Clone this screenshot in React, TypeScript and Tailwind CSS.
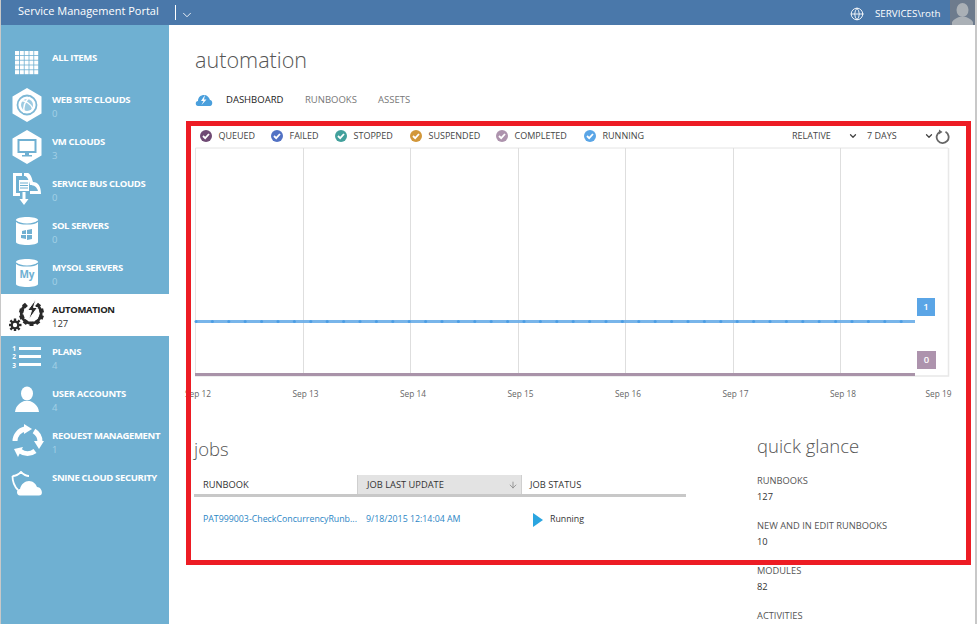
import { ChevronDown, Globe, ArrowDown } from 'lucide-react';
import type { ReactNode } from 'react';

const GridIcon = () => (
  <svg width="24" height="24" viewBox="0 0 24 24" fill="#fff">
    {[0, 1, 2, 3, 4].flatMap(r =>
      [0, 1, 2, 3, 4].map(c => <rect key={`${r}-${c}`} x={c * 4.8} y={r * 4.8} width="4" height="4" />)
    )}
  </svg>
);

const Hex = ({ children }: { children: ReactNode }) => (
  <svg width="30" height="34" viewBox="0 0 30 34">
    <path d="M15 0 L29.500 8.500 V25.500 L15 34 L0.500 25.500 V8.500 Z" fill="#fff" />
    {children}
  </svg>
);

const WebIcon = () => (
  <Hex>
    <circle cx="15" cy="17" r="9.500" fill="none" stroke="#7db8d6" strokeWidth="1.800" />
    <circle cx="15" cy="17" r="6" fill="#9ccbe2" />
    <path d="M9 13 C13 12 19 16 21 21 M18 9 C14 12 11 18 12 25" stroke="#fff" strokeWidth="1.500" fill="none" />
  </Hex>
);

const VmIcon = () => (
  <Hex>
    <rect x="6.500" y="10" width="17" height="12" fill="none" stroke="#6fb0d2" strokeWidth="2" />
    <path d="M13 23 h4 v2 h3 v1.500 h-10 v-1.500 h3 z" fill="#6fb0d2" />
  </Hex>
);

const BusIcon = () => (
  <svg width="28" height="32" viewBox="0 0 28 32" fill="none">
    <path d="M0 0 H9 V3 H3 V20 H7 V23 H0 Z" fill="#fff" />
    <path d="M11 0 H15 C18 1 19 6 20 9 C25 9 28 13 28 21 H17 V18 H25 C24 14 21 12 17 12 C16 8 15 4 12 3 H11 Z" fill="#fff" />
    <rect x="6" y="7" width="10" height="11" fill="#fff" />
    <path d="M7 10 h8 M7 12.500 h8 M7 15 h8" stroke="#6fb0d2" />
    <path d="M9.500 19 h3 v7 h3 l-4.500 6 l-4.500 -6 h3 z" fill="#fff" />
  </svg>
);

const DbIcon = ({ children }: { children: ReactNode }) => (
  <svg width="24" height="30" viewBox="0 0 24 30">
    <path d="M1 4 C1 0 23 0 23 4 V26 C23 30 1 30 1 26 Z" fill="#fff" />
    <path d="M1 5 C5 9 19 9 23 5" stroke="#6fb0d2" strokeWidth="1.200" fill="none" />
    {children}
  </svg>
);

const AutomationIcon = () => {
  const teeth = [40, 75, 110, 145, 180, 215, 250, 285, 320];
  const small = [0, 45, 90, 135, 180, 225, 270, 315];
  return (
    <svg width="36" height="32" viewBox="0 0 36 32">
      {teeth.map(a => (
        <rect key={a} x="20.500" y="2" width="4" height="4.500" fill="#2a2a2a" transform={`rotate(${a} 22.500 14.500)`} />
      ))}
      <path d="M17 5.800 A10 10 0 1 0 28.500 6.500" fill="none" stroke="#2a2a2a" strokeWidth="2.600" />
      <path d="M27 0 L18.500 11.500 H22.500 L19.500 21 L28.500 8.500 H24.500 Z" fill="#2a2a2a" stroke="#fff" strokeWidth="1" />
      {small.map(a => (
        <rect key={a} x="4.800" y="19.500" width="2.400" height="3" fill="#2a2a2a" transform={`rotate(${a} 6 26)`} />
      ))}
      <circle cx="6" cy="26" r="3.300" fill="none" stroke="#2a2a2a" strokeWidth="2.200" />
    </svg>
  );
};

const PlansIcon = () => (
  <svg width="30" height="24" viewBox="0 0 30 24" fill="#fff">
    <rect x="7" y="2" width="22" height="3" />
    <rect x="7" y="10" width="22" height="3" />
    <rect x="7" y="18" width="22" height="3" />
    <text x="2" y="5.500" textAnchor="middle" fontSize="6.500" fontWeight="700" fontFamily="Open Sans">1</text>
    <text x="2" y="14" textAnchor="middle" fontSize="6.500" fontWeight="700" fontFamily="Open Sans">2</text>
    <text x="2" y="22.500" textAnchor="middle" fontSize="6.500" fontWeight="700" fontFamily="Open Sans">3</text>
  </svg>
);

const UserIcon = () => (
  <svg width="24" height="26" viewBox="0 0 24 26" fill="#fff">
    <ellipse cx="12" cy="7.500" rx="6" ry="7" />
    <path d="M0 26 C1 19 5 17 9 15 H15 C19 17 23 19 24 26 Z" />
  </svg>
);

const RequestIcon = () => (
  <svg width="33" height="34" viewBox="0 0 33 34" fill="none">
    <g stroke="#fff" strokeWidth="5">
      <path d="M4 17 A12.500 12.500 0 0 1 14 5" />
      <path d="M23 7 A12.500 12.500 0 0 1 29 18" />
      <path d="M24 27 A12.500 12.500 0 0 1 9 27" />
    </g>
    <g fill="#fff">
      <path d="M13 0 L21 5 L13 10 Z" />
      <path d="M33 17 L28 25 L23 17 Z" />
      <path d="M12 23 L3 25 L7 33 Z" />
    </g>
  </svg>
);

const SecurityIcon = () => (
  <svg width="32" height="25" viewBox="0 0 32 25">
    <path d="M1.500 5 C5 5 8 3 10 1 C12 3 15 5 18 5" fill="none" stroke="#fff" strokeWidth="1.800" />
    <path d="M1.500 5 C1.500 11 3 15 7 19" fill="none" stroke="#fff" strokeWidth="1.800" />
    <path d="M9 24.500 C5 24.500 5 18 9 18 C10 13 14 10 18 10 C22 10 25 13 26 16 C31 16 33 24.500 28 24.500 Z" fill="#fff" />
  </svg>
);

const navItems: { label: string; count?: string; icon: ReactNode; active?: boolean }[] = [
  { label: 'ALL ITEMS', icon: <GridIcon /> },
  { label: 'WEB SITE CLOUDS', count: '0', icon: <WebIcon /> },
  { label: 'VM CLOUDS', count: '3', icon: <VmIcon /> },
  { label: 'SERVICE BUS CLOUDS', count: '0', icon: <BusIcon /> },
  { label: 'SOL SERVERS', count: '0', icon: (
    <DbIcon>
      <path d="M7 15 l4 -1 v4 h-4 z M12 14 l5 -1 v5 h-5 z M6 19 h5 v4 l-5 -1 z M12 19 h5 v4 l-5 1 z" fill="#6fb0d2" />
    </DbIcon>
  ) },
  { label: 'MYSOL SERVERS', count: '0', icon: (
    <DbIcon>
      <text x="12" y="20" textAnchor="middle" fontSize="10" fontWeight="700" fontFamily="Open Sans" fill="#6fb0d2">My</text>
    </DbIcon>
  ) },
  { label: 'AUTOMATION', count: '127', icon: <AutomationIcon />, active: true },
  { label: 'PLANS', count: '4', icon: <PlansIcon /> },
  { label: 'USER ACCOUNTS', count: '4', icon: <UserIcon /> },
  { label: 'REOUEST MANAGEMENT', count: '1', icon: <RequestIcon /> },
  { label: 'SNINE CLOUD SECURITY', icon: <SecurityIcon /> },
];

const legend = [
  { label: 'QUEUED', color: '#6f4a74', w: 'w-[71px]' },
  { label: 'FAILED', color: '#5272c4', w: 'w-[64px]' },
  { label: 'STOPPED', color: '#42a09c', w: 'w-[75px]' },
  { label: 'SUSPENDED', color: '#d2973a', w: 'w-[86px]' },
  { label: 'COMPLETED', color: '#ad93ad', w: 'w-[88px]' },
  { label: 'RUNNING', color: '#5aa5e6', w: 'w-[70px]' },
];

const days = ['Sep 12', 'Sep 13', 'Sep 14', 'Sep 15', 'Sep 16', 'Sep 17', 'Sep 18'];
const glance = [
  { label: 'RUNBOOKS', value: '127' },
  { label: 'NEW AND IN EDIT RUNBOOKS', value: '10' },
  { label: 'MODULES', value: '82' },
  { label: 'ACTIVITIES', value: '' },
];

const Chart = () => {
  const lines = [303, 410, 518, 625, 733, 840];
  const ticks = Array.from({ length: 44 }, (_, i) => i * 16.4);
  return (
    <svg width="756" height="232" viewBox="194 147 756 232" className="block">
      <path d="M195.500 148 H948 M195.500 148 V376" stroke="#e4e4e4" fill="none" />
      <path d="M948.500 148 V376 H195" stroke="#e8e8e8" strokeWidth="1.500" fill="none" />
      {lines.map(x => (
        <line key={x} x1={x + 0.5} x2={x + 0.5} y1="148" y2="374" stroke="#dedede" />
      ))}
      <line x1="196" x2="915" y1="321.500" y2="321.500" stroke="#6aade8" strokeWidth="3" opacity="0.9" />
      {ticks.map(t => (
        <circle key={t} cx={196 + t} cy="321.500" r="1.500" fill="#4d9ee4" />
      ))}
      <rect x="195" y="373" width="720" height="3" fill="#a993a9" />
    </svg>
  );
};

export default function App() {
  return (
    <div className="relative flex h-[624px] w-[977px] flex-col overflow-hidden border-l border-r-2 border-[#c8c8c8] bg-white font-['Open_Sans',sans-serif]">
      <header className="flex h-[25px] shrink-0 items-center bg-[#4a78aa] text-white">
        <span className="ml-[17px] w-[157px] pb-[2px] text-[11px]">Service Management Portal</span>
        <span className="h-[15px] w-px bg-white" />
        <ChevronDown size={14} strokeWidth={1.500} className="ml-[4px] mt-[4px]" />
        <Globe size={14} strokeWidth={1.500} className="ml-auto mt-[2px]" />
        <span className="ml-[11px] w-[75px] pt-[3px] text-[9.800px]">SERVICES\roth</span>
        <span className="flex h-[25px] w-[25px] items-end justify-center overflow-hidden bg-[#6d7b8d]">
          <UserIconSmall />
        </span>
      </header>

      <div className="flex min-h-0 flex-1">
        <aside className="w-[168px] shrink-0 bg-[#6fb0d2] pt-[17px]">
          {navItems.map(item => (
            <div key={item.label} className={`flex h-[42px] ${item.active ? 'bg-white' : ''}`}>
              <div className="flex w-[51px] shrink-0 items-center justify-center pl-[1px]">{item.icon}</div>
              <div className="pt-[8.500px]">
                <div className={`text-[9.500px] font-bold leading-[13px] tracking-[-0.35px] whitespace-nowrap ${item.active ? 'text-[#222]' : 'text-white'}`}>
                  {item.label}
                </div>
                {item.count && (
                  <div className={`mt-[1px] text-[9.500px] leading-[13px] ${item.active ? 'text-[#333]' : 'text-[#a4d0e6]'}`}>{item.count}</div>
                )}
              </div>
            </div>
          ))}
        </aside>

        <main className="min-w-0 flex-1 pl-[26px]">
          <h1 className="mt-[18px] text-[21.600px] font-light leading-[34px] text-[#555]">automation</h1>
          <nav className="mt-[15px] flex h-[16px] items-center text-[9.500px]">
            <svg width="18" height="13" viewBox="0 0 18 13" className="mr-[13px] shrink-0">
              <path d="M3 12 C0 12 0 7 3 7 C3 3 6 1 9 1 C12 1 14 3 15 6 C18 6 18 12 15 12 Z" fill="#4a9fdc" />
              <path d="M10 1 L6 7 H8.500 L6.500 11 L11.500 5.500 H9 Z" fill="#fff" />
            </svg>
            <span className="w-[79px] text-[#222]">DASHBOARD</span>
            <span className="w-[73px] text-[#777]">RUNBOOKS</span>
            <span className="text-[#777]">ASSETS</span>
          </nav>

          <div className="ml-[5px] mt-[18px] flex h-[20px] items-center text-[9px] text-[#444]">
            {legend.map(l => (
              <div key={l.label} className={`flex items-center ${l.w}`}>
                <svg width="12" height="12" viewBox="0 0 12 12" className="mr-[6.500px] shrink-0">
                  <circle cx="6" cy="6" r="6" fill={l.color} />
                  <path d="M3 6 L5.200 8.200 L9 4" stroke="#fff" strokeWidth="1.800" fill="none" />
                </svg>
                {l.label}
              </div>
            ))}
            <span className="ml-[138px] w-[56px]">RELATIVE</span>
            <ChevronDown size={10} strokeWidth={3} className="mr-[9px]" />
            <span className="w-[57px]">7 DAYS</span>
            <ChevronDown size={10} strokeWidth={3} />
            <svg width="15" height="15" viewBox="0 0 15 15" fill="none" className="ml-[1px]">
              <path d="M5 2.700 A6 6 0 1 0 10.500 2.800" stroke="#666" strokeWidth="1.800" />
              <path d="M4 0.500 L7.500 3 L3.800 5.500 Z" fill="#666" />
            </svg>
          </div>

          <div className="-ml-[1px] mt-[1px]">
            <Chart />
          </div>

          <div className="-ml-[10px] mt-[8px] flex h-[13px] text-[8.300px] leading-[13px] text-[#666]">
            {days.map(d => (
              <span key={d} className="w-[107.500px] shrink-0">{d}</span>
            ))}
            <span className="-ml-[12px]">Sep 19</span>
          </div>

          <div className="mt-[35px] flex">
            <section className="-ml-[1px] w-[492px] shrink-0">
              <h2 className="text-[18.500px] font-light leading-[28px] text-[#555]">jobs</h2>
              <div className="mt-[12px] flex h-[22px] border-b-[3px] border-[#c8c8c8] text-[9.300px] text-[#333]">
                <div className="flex w-[163px] items-center pl-[9px]">RUNBOOK</div>
                <div className="flex w-[165px] items-center justify-between border-x border-[#cfcfcf] bg-[#e3e3e3] pl-[9px] pr-[3px]">
                  JOB LAST UPDATE
                  <ArrowDown size={10} className="text-[#888]" />
                </div>
                <div className="flex items-center pl-[8px]">JOB STATUS</div>
              </div>
              <div className="mt-[15px] flex h-[16px] items-center text-[8.800px]">
                <a className="w-[163px] whitespace-nowrap pl-[9px] text-[#2b86c5]">PAT999003-CheckConcurrencyRunb...</a>
                <a className="w-[165px] pl-[9px] text-[#2b86c5]">9/18/2015 12:14:04 AM</a>
                <svg width="12" height="14" viewBox="0 0 12 14" className="ml-[10px] mr-[6px]">
                  <path d="M1 0 L11 7 L1 14 Z" fill="#2aa5e0" />
                </svg>
                <span className="text-[#333]">Running</span>
              </div>
            </section>
            <section className="ml-[71px] -mt-[3px]">
              <h2 className="text-[18.500px] font-light leading-[28px] text-[#555]">quick glance</h2>
              <div className="mt-[13px] flex flex-col gap-[13px]">
                {glance.map(g => (
                  <div key={g.label} className="h-[32px] text-[9.300px] leading-[16px]">
                    <div className="whitespace-nowrap text-[#555]">{g.label}</div>
                    <div className="text-[#333]">{g.value}</div>
                  </div>
                ))}
              </div>
            </section>
          </div>
        </main>
      </div>

      {/* badges on the chart */}
      <div className="absolute left-[916px] top-[298px] flex h-[18px] w-[18px] items-center justify-center bg-[#5aa5e6] text-[9.500px] font-semibold text-white">1</div>
      <div className="absolute left-[916px] top-[351px] flex h-[18px] w-[19px] items-center justify-center bg-[#ad93ad] text-[9.500px] font-semibold text-white">0</div>
      {/* red annotation frame drawn over the screenshot */}
      <div className="absolute left-[185px] top-[121px] h-[444px] w-[785px] border-[5px] border-[#ed1c24]" />
    </div>
  );
}

function UserIconSmall() {
  return (
    <svg width="23" height="23" viewBox="0 0 23 23" fill="#aab0b6">
      <ellipse cx="11.500" cy="8" rx="6" ry="7" />
      <path d="M1 23 V20 C3 17 6 16 8 15 H15 C17 16 20 17 22 20 V23 Z" />
    </svg>
  );
}
